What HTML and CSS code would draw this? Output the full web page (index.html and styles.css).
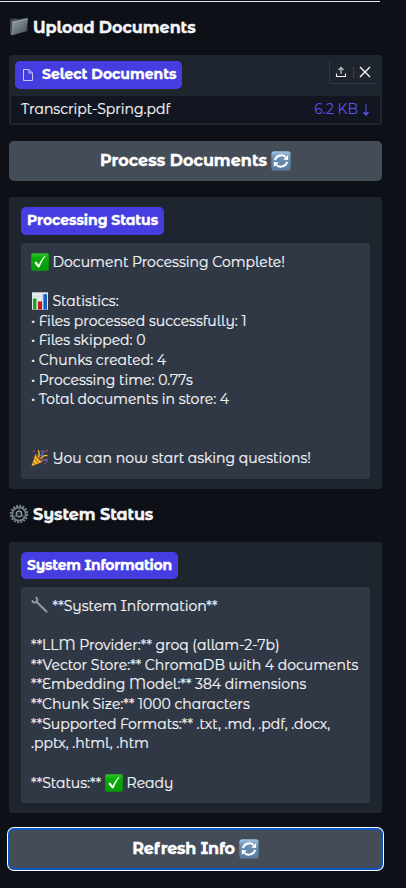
FILE: index.html
```
<!DOCTYPE html>
<html lang="en">
<head>
<meta charset="utf-8">
<title>Documents</title>
<link rel="stylesheet" href="styles.css">
</head>
<body>
<svg class="defs" width="0" height="0" aria-hidden="true">
  <defs>
    <linearGradient id="gFolder" x1="0" y1="0" x2="1" y2="1"><stop offset="0" stop-color="#9ba7ad"/><stop offset="1" stop-color="#414b52"/></linearGradient>
    <linearGradient id="gRefresh" x1="0" y1="0" x2="0" y2="1"><stop offset="0" stop-color="#a5c4de"/><stop offset=".3" stop-color="#6d93b6"/><stop offset="1" stop-color="#55789b"/></linearGradient>
    <linearGradient id="gCheck" x1="0" y1="0" x2="0" y2="1"><stop offset="0" stop-color="#35c52f"/><stop offset=".25" stop-color="#09ae08"/><stop offset="1" stop-color="#079a08"/></linearGradient>
  </defs>
  <symbol id="refresh" viewBox="0 0 20 20">
    <rect x=".3" y=".3" width="19.4" height="19.4" rx="3" fill="url(#gRefresh)"/>
    <path d="M4 9.2A6.2 5.4 0 0 1 14.6 6M16 10.8A6.2 5.4 0 0 1 5.4 14" fill="none" stroke="#fff" stroke-width="2"/>
    <path d="M12.2 8.4 17.2 9V4ZM7.8 11.6 2.8 11V16Z" fill="#fff"/>
  </symbol>
  <symbol id="check" viewBox="0 0 18 18">
    <rect x=".2" y=".2" width="17.6" height="17.6" rx="2" fill="url(#gCheck)"/>
    <path d="M3.3 9.8 5.2 8.6 7.7 11.8C9.3 8 11.2 5.2 13.8 2.9L14.8 3.1C12 6.5 10.2 10 8.6 14.3H6.9Z" fill="#fff"/>
  </symbol>
</svg>
<main class="sidebar">
  <hr class="rule">
  <h2 class="heading">
    <svg class="heading-icon" viewBox="0 0 20 20"><path d="M1 3.2 2 1.8 7.5 1.2 8.5 2.2 18 .8 18.6 2V14L2.5 18.3 1 16.5Z" fill="#3d484f"/><path d="M3.3 5 19 1.8 16.8 14.2 2.2 18.4Z" fill="url(#gFolder)"/><path d="M3.3 5 19 1.8" stroke="#b7c0c4" stroke-width=".7"/></svg>
    <span>Upload Documents</span>
  </h2>

  <section class="panel upload">
    <div class="upload-bar">
      <span class="label label-file">
        <svg class="file-icon" viewBox="0 0 12 14" fill="none" stroke="#c9c5fa"><path d="M1.5 1.5H7L10.5 5V12.5H1.5ZM7 1.5V5H10.5"/></svg>
        <span>Select Documents</span>
      </span>
      <div class="tools">
        <svg class="tool" viewBox="0 0 12 12" fill="none"><path d="M1.5 7.5V10.5H10.5V7.5" stroke="#f4f4f5" stroke-width="1.1"/><path d="M6 8V1.8M3.5 4 6 1.5 8.5 4" stroke="#b9bcc0" stroke-width="1.3"/></svg>
        <i class="divider"></i>
        <svg class="tool" viewBox="0 0 12 12" fill="none" stroke="#f8f8f8" stroke-width="1.4"><path d="M1 1 11 11M11 1 1 11"/></svg>
      </div>
    </div>
    <div class="file-row">
      <span>Transcript-Spring.pdf</span>
      <span class="size"><span>6.2 KB</span><svg class="down" viewBox="0 0 8 14"><path d="M4 1V10" stroke="#5b54f0" stroke-width="1.3" stroke-dasharray="1.5 .6"/><path d="M1.2 8.5 4 10 6.8 8.5V9.8L4 13 1.2 9.8Z" fill="#5b54f0"/></svg></span>
    </div>
  </section>

  <button class="button"><span>Process Documents</span><svg class="refresh"><use href="#refresh"/></svg></button>

  <section class="panel status">
    <span class="label">Processing Status</span>
    <div class="output">
      <p><svg class="emoji"><use href="#check"/></svg>Document Processing Complete!</p>
      <p></p>
      <p><svg class="emoji" viewBox="0 0 18 18"><path d="M1 .3H17V17.7H1Z" fill="#e4ebef"/><path d="M1 4.5H17M1 9H17M1 13.5H17M6.5 0V18M11.5 0V18" stroke="#c4d0d8" stroke-width=".6"/><path d="M2 6.5H5.4V17.5H2Z" fill="#12a516"/><path d="M7 9.5H11V17.5H7Z" fill="#c41720"/><path d="M12.4 2.2H16V17.5H12.4Z" fill="#165fc0"/></svg>Statistics:</p>
      <p>• Files processed successfully: 1</p>
      <p>• Files skipped: 0</p>
      <p>• Chunks created: 4</p>
      <p>• Processing time: 0.77s</p>
      <p>• Total documents in store: 4</p>
      <p></p>
      <p></p>
      <p><svg class="emoji" viewBox="0 0 18 18"><path d="M4.5 5 .5 17.3 11.8 12.8Z" fill="#f4b62c"/><path d="M3.3 9 7.5 14.5M2 13 4.5 15.7" stroke="#c97419" stroke-width="1.1"/><ellipse cx="8.4" cy="8.8" rx="1.6" ry="5" transform="rotate(-43 8.4 8.8)" fill="#8a4a2b"/><path d="M7.5 8.5Q9 5 7.4 1.2M10 9.5Q13 5.2 16.5 6.8" fill="none" stroke="#f7c23b" stroke-width="1.4"/><path d="M9.5 7Q12.5 5 12.3 1M11.5 10.5 16.7 12.5" fill="none" stroke="#3d83dd" stroke-width="1.3"/><path d="M2 2.2H4M9.5 2.3H11M14 3.2 17 1.3M14 10.3H17M13.5 14.5 15.3 15.2" stroke="#d8375b" stroke-width="1.3"/></svg>You can now start asking questions!</p>
    </div>
  </section>

  <h2 class="heading">
    <svg class="heading-icon" viewBox="0 0 20 20" fill="none"><circle cx="10" cy="10" r="8.3" stroke="#77828a" stroke-width="2" stroke-dasharray="1.9 1.36"/><circle cx="10" cy="10" r="6.7" stroke="#75818a" stroke-width="1.8"/><path d="M10 10V4M10 10 15.5 13M10 10 4.5 13" stroke="#56626a" stroke-width="1.2"/><circle cx="10" cy="10" r="2.8" fill="#242b32" stroke="#909ba2" stroke-width="1.2"/></svg>
    <span>System Status</span>
  </h2>

  <section class="panel info">
    <span class="label label-info">System Information</span>
    <div class="output">
      <p><svg class="emoji wrench" viewBox="0 0 18 18" fill="none"><path d="M5.6 6 15.6 15.8" stroke="#7f878c" stroke-width="2.3" stroke-linecap="round"/><path d="M6.5 6.3 15.4 15" stroke="#b1b8bc" stroke-width=".8"/><path d="M1 4.5Q3 8 5.7 5.7 7.5 3.2 4.7 1.2" stroke="#9ba3a8" stroke-width="1.8"/></svg>**System Information**</p>
      <p></p>
      <p>**LLM Provider:** groq (allam-2-7b)</p>
      <p>**Vector Store:** ChromaDB with 4 documents</p>
      <p>**Embedding Model:** 384 dimensions</p>
      <p>**Chunk Size:** 1000 characters</p>
      <p>**Supported Formats:** .txt, .md, .pdf, .docx,</p>
      <p>.pptx, .html, .htm</p>
      <p></p>
      <p class="ready">**Status:**<svg class="emoji emoji-inline"><use href="#check"/></svg>Ready</p>
    </div>
  </section>

  <button class="button focused"><span>Refresh Info</span><svg class="refresh"><use href="#refresh"/></svg></button>
</main>
</body>
</html>
```
FILE: styles.css
```
* { box-sizing: border-box; }
body {
  margin: 0;
  height: 888px;
  overflow: hidden;
  background: #0d1017;
  color: #f3f4f6;
  font: 14px/19.6px "Montserrat Alternates", Montserrat, Inter, sans-serif;
  letter-spacing: -.01px;
  white-space: nowrap;
  -webkit-text-stroke: .2px;
}
.defs { display: block; }
.sidebar { width: 382px; padding-left: 9px; }
.rule { height: 1px; margin: 1px 2px 0 -9px; border: 0; background: #e8e8ec; }
.heading {
  display: flex;
  align-items: center;
  gap: 4px;
  height: 22px;
  margin: 14px 0 0;
  font-size: 16px;
  font-weight: 700;
  letter-spacing: -.06px;
  -webkit-text-stroke: .35px;
}
.heading span { padding-top: 2px; }
.heading-icon { width: 20px; height: 20px; flex: none; }
.panel { border-radius: 3px; background: #1e252f; }
.upload { height: 70px; margin-top: 17px; padding: 6px 2px 2px; }
.upload-bar { display: flex; justify-content: space-between; height: 35px; padding: 0 4px; }
.label {
  display: flex;
  align-items: center;
  width: 143px;
  height: 28px;
  padding: 0 0 1px 6px;
  border-radius: 5px;
  background: #463de0;
  color: #fff;
  font-weight: 700;
  letter-spacing: -.04px;
  -webkit-text-stroke: .35px;
}
.label-file { width: 167px; gap: 8px; padding-left: 7px; letter-spacing: 0; }
.label-info { width: 157px; height: 27px; padding-bottom: 0; letter-spacing: -.22px; }
.file-icon { width: 12px; height: 14px; margin-top: 1px; }
.tools {
  display: flex;
  align-items: center;
  justify-content: space-between;
  width: 47px;
  height: 23px;
  padding: 0 5px;
  border: solid #303947;
  border-width: 0 0 1px 1px;
  border-radius: 0 0 0 3px;
}
.tool { width: 12px; height: 12px; }
.divider { width: 1px; height: 11px; background: #39424f; }
.file-row {
  display: flex;
  align-items: center;
  justify-content: space-between;
  height: 27px;
  padding: 0 10px;
  background: #121621;
}
.size { display: flex; align-items: center; gap: 4px; color: #5b54f0; -webkit-text-stroke: 0; }
.down { width: 8px; height: 14px; }
.button {
  display: flex;
  align-items: center;
  justify-content: center;
  gap: 4px;
  width: 373px;
  height: 40px;
  margin: 16px 0 0;
  padding: 0 0 1px;
  border: 0;
  border-radius: 5px;
  background: #434c57;
  color: #fff;
  font: 700 16px/24px "Montserrat Alternates", Montserrat, Inter, sans-serif;
  -webkit-text-stroke: .35px;
}
.refresh { width: 20px; height: 20px; }
.focused { outline: 0; letter-spacing: -.2px; box-shadow: 0 0 0 1px #0b57c4, 0 0 0 2px #fff, inset 0 0 0 1px #0b57c4; }
.status { height: 292px; margin-top: 16px; padding: 10px 12px; }
.info { height: 271px; margin-top: 17px; padding: 10px 12px; }
.output { margin-top: 8px; padding: 10px; border-radius: 3px; background: #303846; }
.info .output { letter-spacing: -.02px; }
.output p { display: flex; align-items: center; height: 19.6px; margin: 0; white-space: pre; }
.emoji { width: 18px; height: 18px; margin: -2px 3.5px 0 0; flex: none; }
.emoji-inline { margin-left: 4px; }
.wrench { margin-top: -4px; }
.output .ready { padding-top: 1px; }
```
